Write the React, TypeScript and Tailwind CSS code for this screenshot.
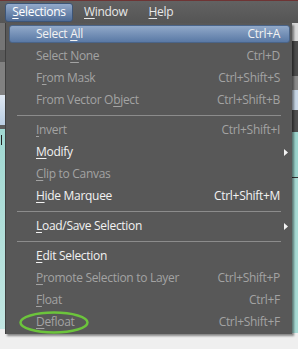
import React from "react";

type Item =
  | { sep: true }
  | {
      sep?: false;
      pre: string;
      u: string;
      post: string;
      sc?: string;
      disabled?: boolean;
      active?: boolean;
      sub?: boolean;
    };

const items: Item[] = [
  { pre: "Select ", u: "A", post: "ll", sc: "Ctrl+A", active: true },
  { pre: "Select ", u: "N", post: "one", sc: "Ctrl+D", disabled: true },
  { pre: "F", u: "r", post: "om Mask", sc: "Ctrl+Shift+S", disabled: true },
  { pre: "From Vector O", u: "b", post: "ject", sc: "Ctrl+Shift+B", disabled: true },
  { sep: true },
  { pre: "", u: "I", post: "nvert", sc: "Ctrl+Shift+I", disabled: true },
  { pre: "", u: "M", post: "odify", sub: true },
  { pre: "", u: "C", post: "lip to Canvas", disabled: true },
  { pre: "", u: "H", post: "ide Marquee", sc: "Ctrl+Shift+M" },
  { sep: true },
  { pre: "", u: "L", post: "oad/Save Selection", sub: true },
  { sep: true },
  { pre: "", u: "E", post: "dit Selection" },
  { pre: "", u: "P", post: "romote Selection to Layer", sc: "Ctrl+Shift+P", disabled: true },
  { pre: "", u: "F", post: "loat", sc: "Ctrl+F", disabled: true },
  { pre: "", u: "D", post: "efloat", sc: "Ctrl+Shift+F", disabled: true },
];

const font = { fontFamily: '"Segoe UI", "Open Sans", "Noto Sans", sans-serif' };

export default function App() {
  return (
    <div
      className="relative w-[298px] h-[349px] overflow-hidden bg-[#efefef] text-[12px] tracking-[-0.3px]"
      style={font}
    >
      {/* menu bar */}
      <div className="flex h-[23px] items-center border-t border-[#6e3434] bg-gradient-to-b from-[#626262] to-[#555555] text-[#e8e8e8]">
        <div className="ml-[5px] flex h-[19px] w-[68px] items-center justify-center rounded-[3px] border border-[#3d5577] bg-gradient-to-b from-[#93aacb] to-[#4f6c96] text-white">
          <span>
            <span className="underline underline-offset-2">S</span>elections
          </span>
        </div>
        <span className="ml-[11px]">
          <span className="underline underline-offset-2">W</span>indow
        </span>
        <span className="ml-[21px]">
          <span className="underline underline-offset-2">H</span>elp
        </span>
      </div>

      {/* background app strips */}
      <div className="flex h-[326px] justify-between">
        <div className="flex w-[5px] flex-col">
          <div className="h-[27px] bg-[#757575]" />
          <div className="h-[12px] bg-[#5b5b5b]" />
          <div className="h-[33px] bg-[#818181]" />
          <div className="h-[30px] bg-gradient-to-b from-[#dfe8f2] to-[#b9cde2]" />
          <div className="h-[4px] bg-[#5d5d5d]" />
          <div className="relative h-[200px] bg-gradient-to-b from-[#a0d8d2] to-[#c2e6e2]">
            <div className="ml-[1px] mt-[6px] h-[10px] w-[1px] bg-[#222]" />
          </div>
          <div className="flex-1 bg-[#efefef]" />
        </div>
        <div className="flex w-[6px] flex-col">
          <div className="h-[18px] bg-[#d8d8d8]" />
          <div className="h-[35px] bg-[#4c4c4c]" />
          <div className="h-[14px] bg-[#8a8a8a]" />
          <div className="h-[20px] bg-[#c6d5e5]" />
          <div className="h-[22px] bg-[#4f4f4f]" />
          <div className="h-[45px] bg-[#9bd3cc]" />
          <div className="h-[1px] bg-[#333]" />
          <div className="h-[155px] bg-[#a8dad4]" />
          <div className="flex-1 bg-[#efefef]" />
        </div>
      </div>

      {/* dropdown menu */}
      <div className="absolute left-[5px] top-[23px] w-[287px] border-l border-[#3f3f3f] bg-[#585858] pb-[1px] shadow-[2px_2px_2px_rgba(0,0,0,0.45)]">
        {items.map((it, i) =>
          it.sep ? (
            <div key={i} className="flex h-[8px] items-center pl-[11px] pr-[11px]">
              <div className="h-[1px] w-full bg-[#8c8c8c]" />
            </div>
          ) : (
            <div key={i} className="relative flex h-[22px] items-center">
              {it.active && (
                <div className="absolute left-[3px] right-[2px] top-[2px] bottom-[2px] rounded-[3px] border border-[#4a6488] bg-gradient-to-b from-[#91a9c9] to-[#5a79a5]" />
              )}
              <span
                className={`relative ml-[30px] ${
                  it.disabled ? "text-[#a3a3a3]" : "text-[#f2f2f2]"
                }`}
              >
                {it.pre}
                <span className="underline underline-offset-2">{it.u}</span>
                {it.post}
              </span>
              <span
                className={`relative ml-auto mr-[12px] ${
                  it.disabled ? "text-[#a3a3a3]" : "text-[#f2f2f2]"
                }`}
              >
                {it.sc}
              </span>
              {it.sub && (
                <svg
                  className="absolute right-[4px] top-[8px]"
                  width="4"
                  height="7"
                  viewBox="0 0 4 7"
                >
                  <path d="M0 0 L4 3.5 L0 7 Z" fill="#f4f4f4" />
                </svg>
              )}
            </div>
          )
        )}
      </div>

      {/* green annotation ellipse */}
      <svg
        className="absolute left-[19px] top-[311px]"
        width="70"
        height="23"
        viewBox="0 0 70 23"
      >
        <ellipse
          cx="35"
          cy="11.5"
          rx="33.5"
          ry="10"
          fill="none"
          stroke="#6cc43c"
          strokeWidth="2.5"
        />
      </svg>
    </div>
  );
}
